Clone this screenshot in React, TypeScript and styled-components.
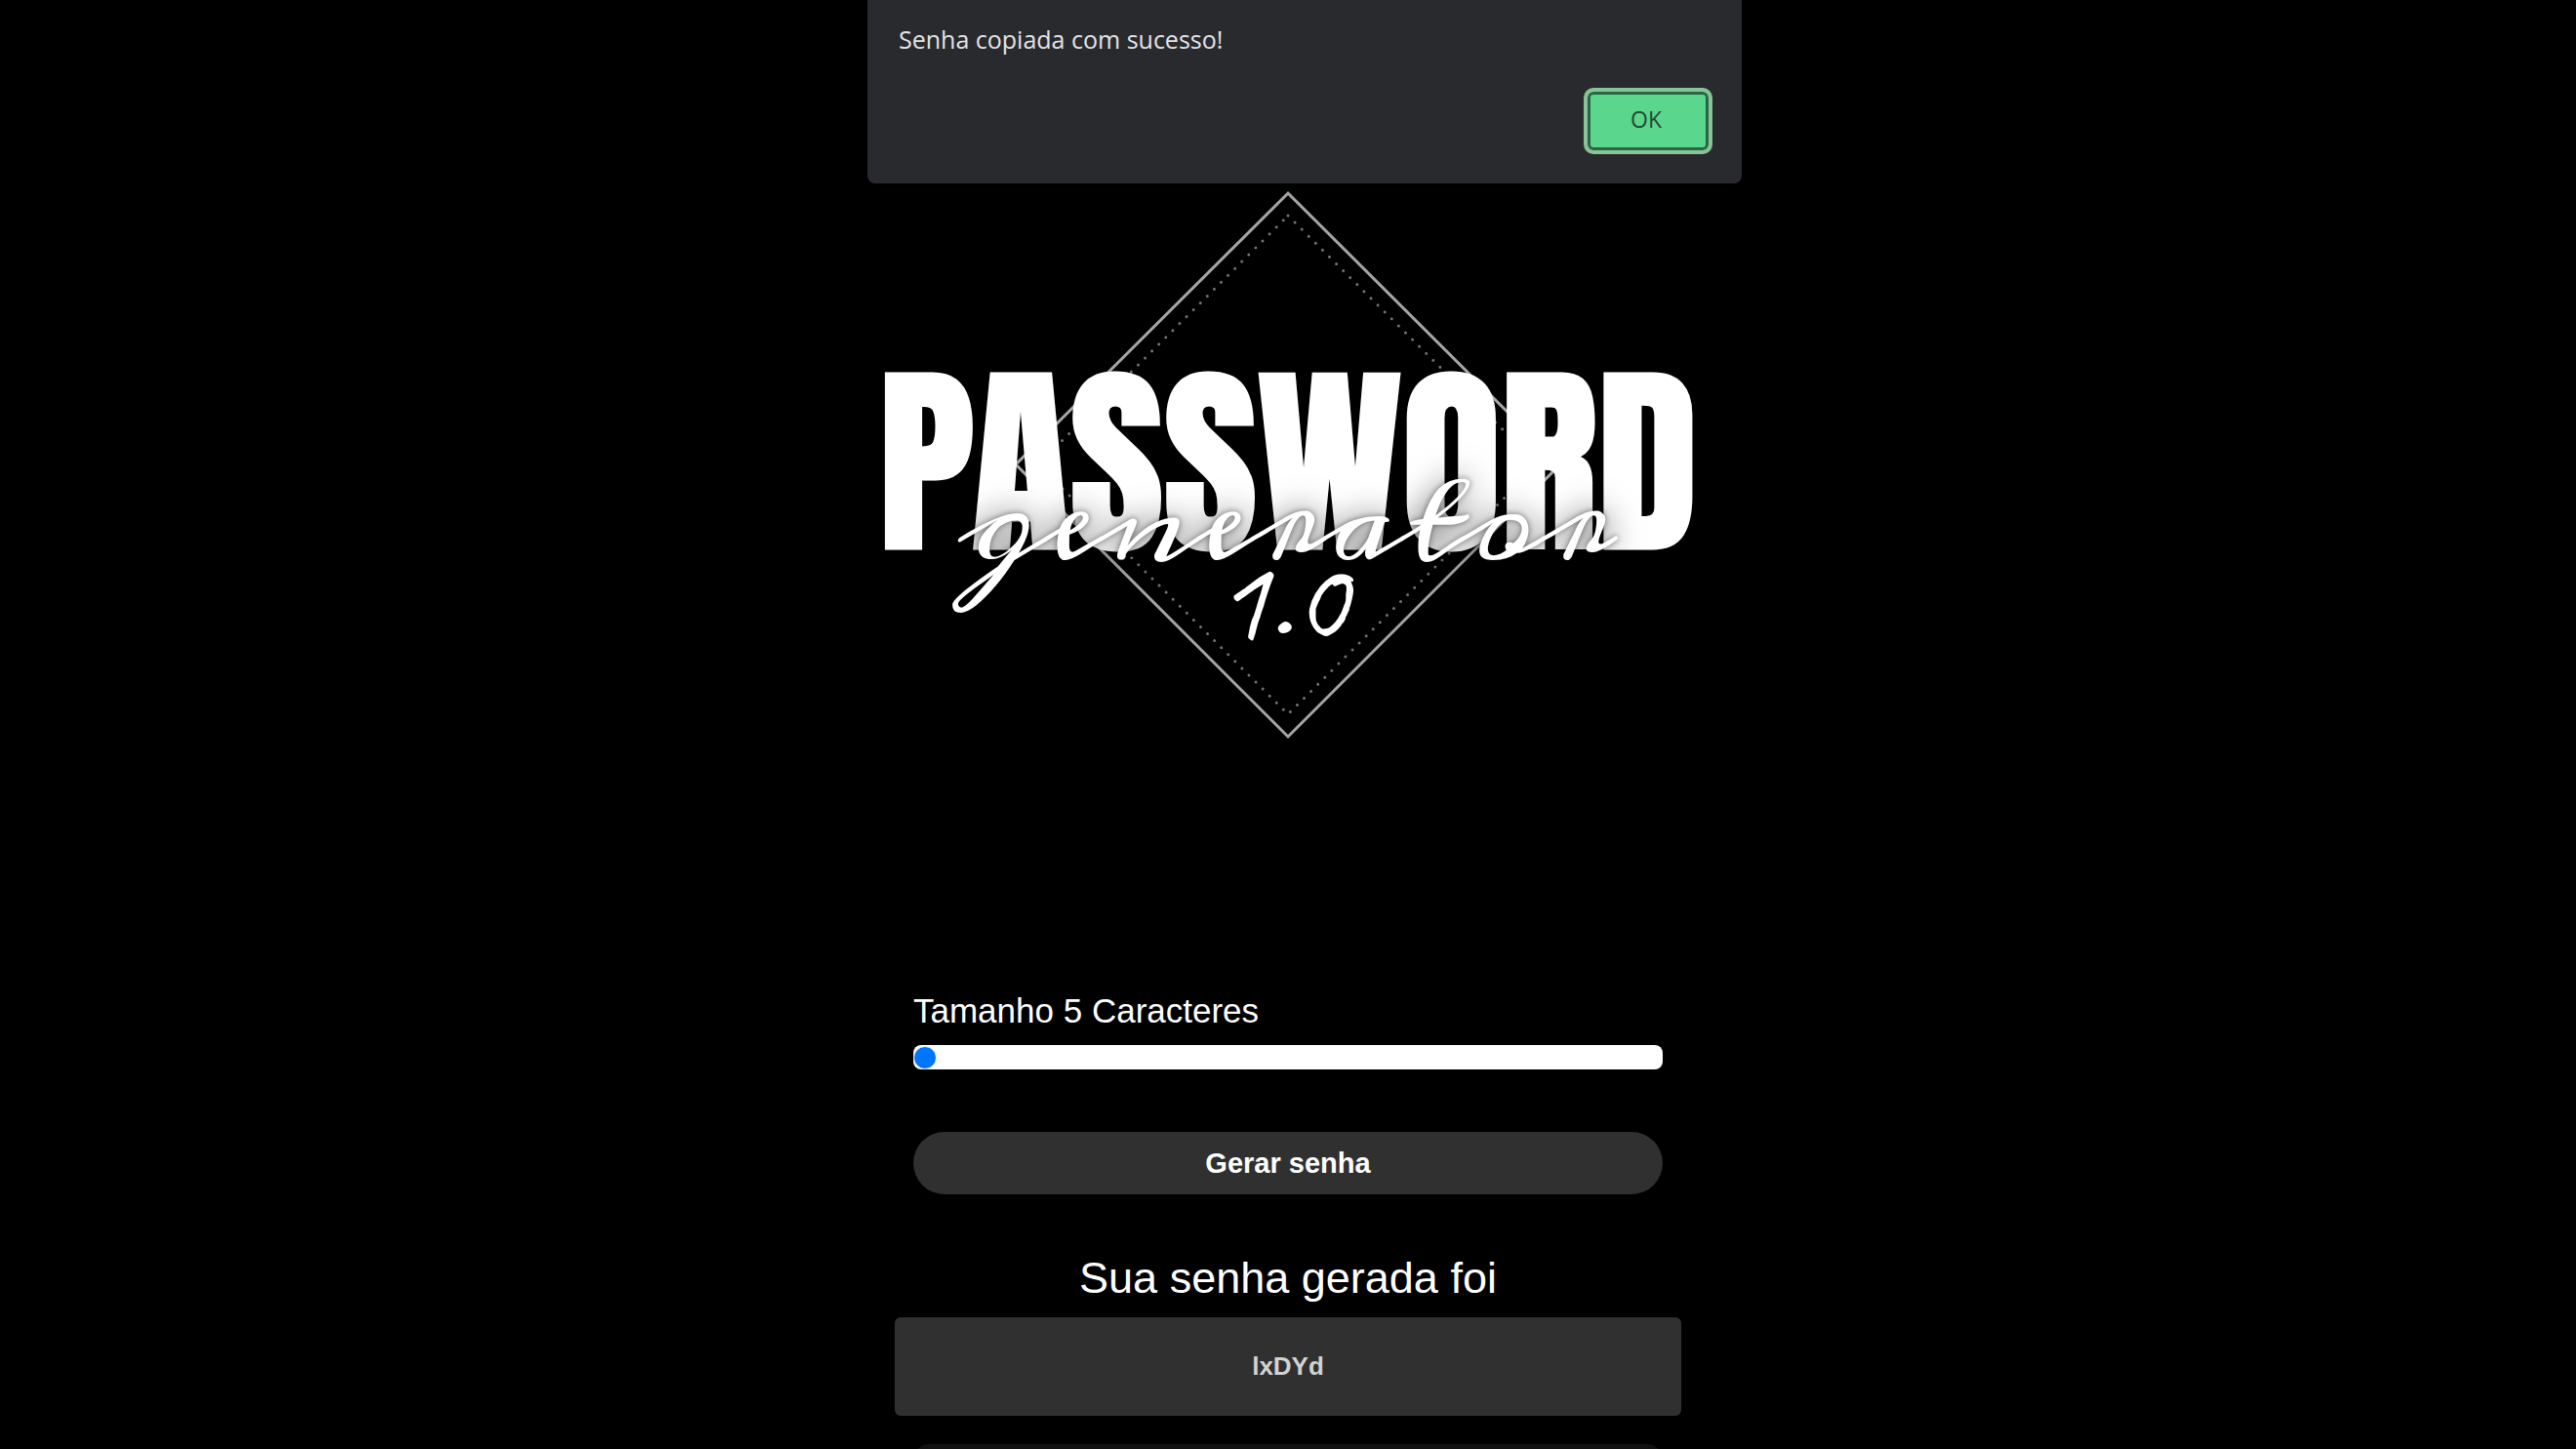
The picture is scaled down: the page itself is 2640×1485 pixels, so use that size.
import React, { useState } from "react";
import styled, { createGlobalStyle } from "styled-components";

const GlobalStyle = createGlobalStyle`
  *, *::before, *::after { box-sizing: border-box; }
  body {
    margin: 0;
    background: #000;
    color: #fff;
    font-family: "Liberation Sans", Arial, sans-serif;
  }
  button, input { font: inherit; margin: 0; }
`;

const Page = styled.div`
  position: relative;
  height: 100vh;
  overflow: hidden;
`;

const Main = styled.main`
  display: flex;
  flex-direction: column;
  align-items: center;
  padding: 195px 16px 0;
`;

const Dialog = styled.div`
  position: absolute;
  top: 0;
  left: 50%;
  z-index: 1;
  display: flex;
  flex-direction: column;
  gap: 33px;
  width: 896px;
  max-width: 100%;
  margin-left: -431px;
  padding: 23px 30px 30px 32px;
  border-radius: 0 0 8px 8px;
  background: #292a2d;
  color: #e3e4e6;
  font-family: "Open Sans", "Noto Sans", sans-serif;
`;

const Message = styled.p`
  margin: 0;
  font-size: 25px;
  line-height: 34px;
`;

const OkButton = styled.button`
  align-self: flex-end;
  width: 132px;
  height: 68px;
  padding: 0 4px 4px 0;
  border: 4px solid #86c397;
  border-radius: 10px;
  background: #5bd68d;
  box-shadow: inset 0 0 0 3px #2c6245;
  color: #1f4a33;
  font-size: 23px;
  font-weight: 500;
`;

const Logo = styled.svg`
  display: block;
  width: 816px;
  max-width: 100%;
  overflow: visible;
`;

const Outline = styled.polygon`
  fill: none;
  stroke: #a6a6a6;
  stroke-width: 3;
`;

const Dots = styled.polygon`
  fill: none;
  stroke: #747474;
  stroke-width: 3;
  stroke-linecap: round;
  stroke-dasharray: 0 10;
`;

const Title = styled.text`
  fill: #fff;
  stroke: #fff;
  stroke-width: 3;
  font-family: Anton, "Roboto Condensed", sans-serif;
  font-size: 208px;
  text-anchor: middle;
`;

const Script = styled.g`
  fill: #fff;
  text-anchor: middle;
  filter: drop-shadow(0 0 3px rgba(0, 0, 0, 0.5)) drop-shadow(0 0 16px rgba(0, 0, 0, 0.6));
`;

const Word = styled.text`
  font-family: Meddon, "League Script", "Dancing Script", cursive;
  font-size: 116px;
`;

const Version = styled.text`
  font-family: Caveat, "Dancing Script", cursive;
  font-size: 124px;
`;

const Controls = styled.section`
  display: flex;
  flex-direction: column;
  width: 768px;
  max-width: 100%;
  margin-top: 259px;
`;

const Label = styled.label`
  font-size: 35px;
  line-height: 40px;
`;

const Range = styled.input`
  appearance: none;
  width: 100%;
  height: 25px;
  margin: 15px 0 64px;
  border-radius: 8px;
  background: #fff;

  &::-webkit-slider-thumb {
    appearance: none;
    width: 24px;
    height: 24px;
    border: 1px solid #fff;
    border-radius: 50%;
    background: #0075ff;
  }
`;

const PillButton = styled.button<{ $muted?: boolean }>`
  width: 100%;
  height: 64px;
  border: 0;
  border-radius: ${(p) => (p.$muted ? "16px" : "32px")};
  background: ${(p) => (p.$muted ? "#111" : "#303030")};
  color: #fff;
  font-size: 29px;
  font-weight: 700;
`;

const Result = styled.section`
  display: flex;
  flex-direction: column;
  align-items: center;
  width: 806px;
  max-width: 100%;
  margin-top: 61px;
`;

const Heading = styled.h2`
  margin: 0 0 15px;
  font-size: 45px;
  font-weight: 400;
  line-height: 50px;
`;

const Password = styled.output`
  display: flex;
  align-items: center;
  justify-content: center;
  width: 100%;
  height: 101px;
  border-radius: 6px;
  background: #303030;
  color: #d2d2d2;
  font-size: 26px;
  font-weight: 700;
`;

const CopyArea = styled.div`
  width: 768px;
  max-width: 100%;
  margin-top: 29px;
`;

export default function App() {
  const [size, setSize] = useState(5);

  return (
    <Page>
      <GlobalStyle />
      <Dialog role="alertdialog" aria-describedby="message">
        <Message id="message">Senha copiada com sucesso!</Message>
        <OkButton type="button">OK</OkButton>
      </Dialog>

      <Main>
        <Logo viewBox="0 0 816 562">
          <Outline points="408,3 687,281 408,560 129,281" />
          <Dots points="408,26 664,281 408,537 152,281" />
          <Title x="408" y="367">PASSWORD</Title>
          <Script>
            <Word x="408" y="378">generator</Word>
            <Version x="400" y="460">1.0</Version>
          </Script>
        </Logo>

        <Controls>
          <Label htmlFor="size">Tamanho {size} Caracteres</Label>
          <Range
            id="size"
            type="range"
            min={5}
            max={50}
            value={size}
            onChange={(e) => setSize(Number(e.target.value))}
          />
          <PillButton type="button">Gerar senha</PillButton>
        </Controls>

        <Result>
          <Heading>Sua senha gerada foi</Heading>
          <Password>lxDYd</Password>
          <CopyArea>
            <PillButton type="button" $muted aria-label="Copiar senha" />
          </CopyArea>
        </Result>
      </Main>
    </Page>
  );
}
